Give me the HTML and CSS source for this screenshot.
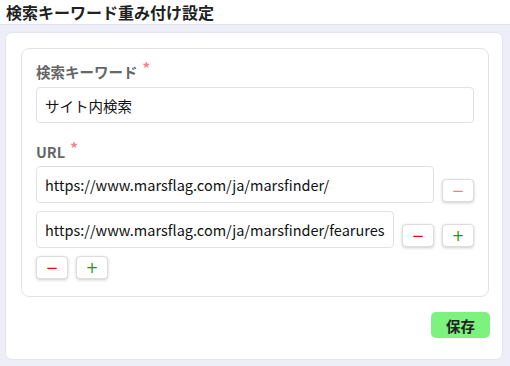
FILE: index.html
```html
<!DOCTYPE html>
<html lang="ja">
<head>
    <meta charset="UTF-8">
    <meta name="viewport" content="width=device-width, initial-scale=1.0">
    <title>検索キーワード重み付け設定</title>
    <link rel="stylesheet" href="styles.css">
</head>
<body>
    <div class="header">検索キーワード重み付け設定</div>
    <div class="page">
        <div class="card">
            <div class="form-box">
                <div class="label">検索キーワード<span class="req">*</span></div>
                <input type="text" class="text-input" value="サイト内検索">

                <div class="label url-label">URL<span class="req">*</span></div>
                <div class="url-row">
                    <input type="text" class="text-input" value="https://www.marsflag.com/ja/marsfinder/">
                    <button class="btn-small minus" disabled>&minus;</button>
                </div>
                <div class="url-row">
                    <input type="text" class="text-input" value="https://www.marsflag.com/ja/marsfinder/fearures">
                    <button class="btn-small minus">&minus;</button>
                    <button class="btn-small plus">+</button>
                </div>
                <div class="url-row">
                    <button class="btn-small minus">&minus;</button>
                    <button class="btn-small plus">+</button>
                </div>
            </div>
            <div class="actions">
                <button class="btn-save">保存</button>
            </div>
        </div>
    </div>
</body>
</html>
```

FILE: styles.css
```css
body {
    margin: 0;
    font-family: "Noto Sans CJK JP", "Noto Sans", sans-serif;
    background-color: #eeeef8;
    color: #222;
}
.header {
    background: white;
    height: 24px;
    padding-left: 6px;
    font-size: 16px;
    font-weight: bold;
    line-height: 24px;
    border-bottom: 1px solid #e2e2ea;
}
.page {
    padding: 7px 7px 5px 5px;
}
.card {
    background: white;
    border: 1px solid #e4e4ec;
    border-radius: 7px;
    padding: 15px 13px 21px 15px;
}
.form-box {
    border: 1px solid #e2e2e2;
    border-radius: 8px;
    padding: 11px 14px 17px 14px;
}
.label {
    font-size: 14.5px;
    font-weight: bold;
    color: #666;
    line-height: 24px;
    margin-bottom: 3px;
}
.url-label {
    margin-top: 17px;
    margin-bottom: 2px;
}
.req {
    color: #f4828c;
    font-size: 15px;
    vertical-align: top;
    margin-left: 5px;
    position: relative;
    top: -4px;
}
.text-input {
    display: block;
    box-sizing: border-box;
    width: 100%;
    height: 36px;
    padding: 0 8px;
    font-family: "Noto Sans CJK JP", "Noto Sans", sans-serif;
    font-size: 14.5px;
    color: #111;
    border: 1px solid #e2e2e2;
    border-radius: 4px;
    outline: none;
}
.url-row {
    display: flex;
    align-items: flex-end;
    gap: 8px;
    margin-bottom: 8px;
}
.url-row:last-child {
    margin-bottom: 0;
}
.url-row .text-input {
    flex: 1;
    width: auto;
    height: 37px;
}
.btn-small {
    width: 32px;
    height: 23px;
    margin-bottom: 1px;
    padding: 0;
    background: white;
    border: 1px solid #ddd;
    border-radius: 4px;
    box-shadow: 0 1px 3px rgba(0, 0, 0, 0.2);
    font-family: "DejaVu Sans", sans-serif;
    font-size: 15px;
    line-height: 20px;
    cursor: pointer;
}
.url-row:last-child .btn-small {
    margin-bottom: 0;
}
.minus {
    color: #f00;
}
.minus:disabled {
    color: #f47f88;
    cursor: default;
}
.plus {
    color: #2f8f00;
}
.actions {
    display: flex;
    justify-content: flex-end;
    margin-top: 15px;
    margin-right: -1px;
}
.btn-save {
    width: 59px;
    height: 26px;
    padding: 0;
    background: #7ef27e;
    border: none;
    border-radius: 5px;
    font-family: "Noto Sans CJK JP", sans-serif;
    font-size: 14.5px;
    font-weight: bold;
    color: #222;
    cursor: pointer;
}
```
